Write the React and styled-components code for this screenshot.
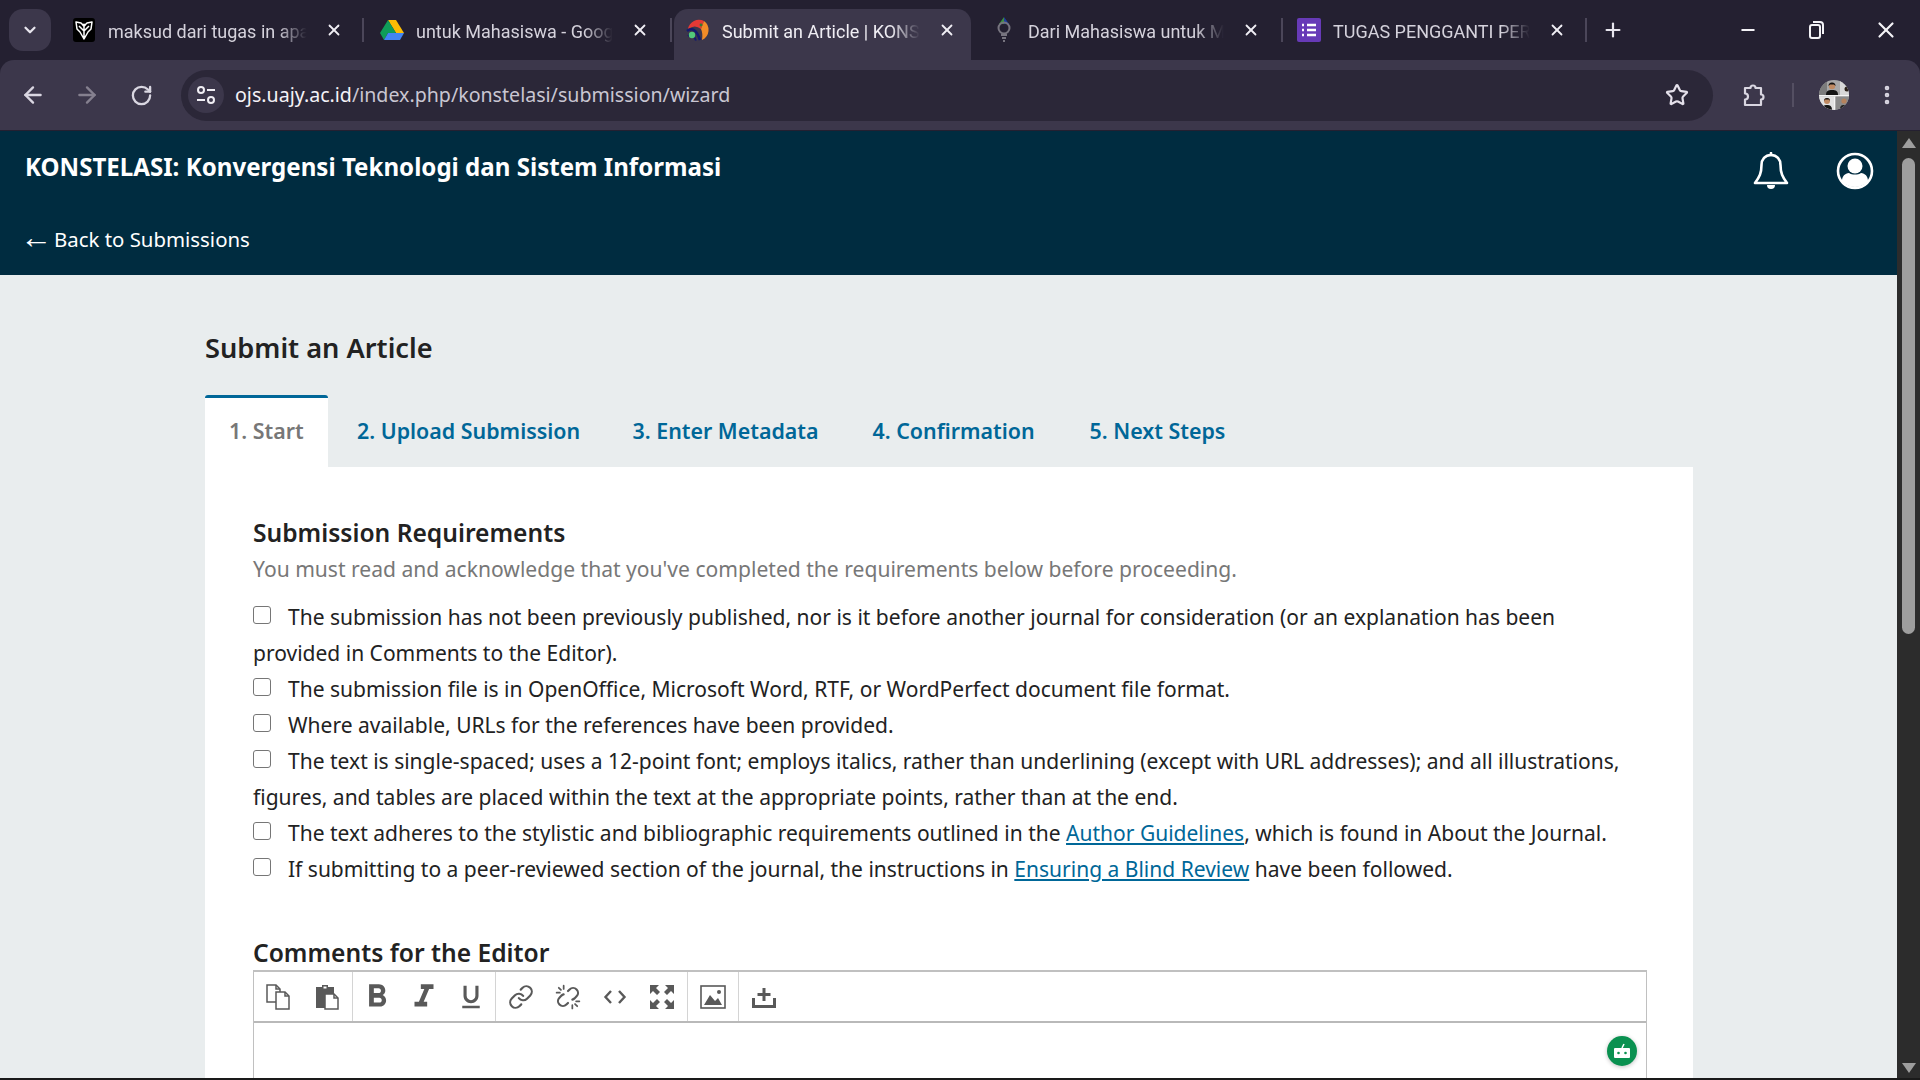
import styled, { createGlobalStyle } from "styled-components";
import {
  ArrowLeft,
  ArrowRight,
  RotateCw,
  Star,
  EllipsisVertical,
  Plus,
  X,
  Minus,
  ChevronDown,
} from "lucide-react";
import { MdFormatBold, MdFormatItalic, MdFormatUnderlined } from "react-icons/md";

const GlobalStyle = createGlobalStyle`
  html, body {
    margin: 0;
    padding: 0;
    background: #000;
    overflow: hidden;
  }
  * { box-sizing: border-box; }
`;

const Screen = styled.div`
  width: 1920px;
  height: 1080px;
  display: flex;
  flex-direction: column;
  overflow: hidden;
  font-family: "Noto Sans", sans-serif;
  border-bottom: 2px solid #1a1a1a;
`;

/* browser chrome */
const TabStrip = styled.div`
  height: 60px;
  flex-shrink: 0;
  background: #242031;
  display: flex;
  align-items: flex-start;
  padding: 9px 0 0 9px;
  font-family: "Roboto", "Noto Sans", sans-serif;
`;

const TabListButton = styled.div`
  width: 42px;
  height: 42px;
  margin-right: 9px;
  border-radius: 14px;
  background: #3c374b;
  color: #e8e6ee;
  display: flex;
  align-items: center;
  justify-content: center;
`;

const Tab = styled.div`
  position: relative;
  width: ${({ $width }) => $width}px;
  height: 51px;
  margin-left: ${({ $gap }) => $gap || 0}px;
  flex-shrink: 0;
  display: flex;
  align-items: center;
  padding: 0 ${({ $padRight }) => $padRight}px 9px ${({ $pad }) => $pad}px;
  border-radius: 14px 14px 0 0;
  background: ${({ $active }) => ($active ? "#3c374b" : "transparent")};
  color: ${({ $active }) => ($active ? "#f0eef4" : "#d5d2dc")};

  ${({ $divider }) =>
    $divider &&
    `&::after {
      content: "";
      position: absolute;
      right: 2px;
      top: 9px;
      width: 2px;
      height: 24px;
      background: #4b4659;
    }`}
`;

const Favicon = styled.span`
  width: 24px;
  height: 24px;
  flex-shrink: 0;
  display: flex;
  align-items: center;
  justify-content: center;
`;

const TabTitle = styled.span`
  flex: 1;
  margin-left: 12px;
  padding-top: 2px;
  font-size: 18px;
  white-space: nowrap;
  overflow: hidden;
  -webkit-mask-image: linear-gradient(to right, #000 82%, transparent 96%);
  mask-image: linear-gradient(to right, #000 82%, transparent 96%);
`;

const TabClose = styled(X)`
  flex-shrink: 0;
  margin-left: 10px;
  color: #f0eef4;
`;

const NewTab = styled.div`
  width: 48px;
  height: 42px;
  display: flex;
  align-items: center;
  justify-content: center;
  color: #e8e6ee;
`;

const WindowControls = styled.div`
  margin-left: auto;
  height: 42px;
  display: flex;
  align-items: center;
  color: #f4f3f7;
`;

const WindowButton = styled.div`
  width: 68px;
  height: 42px;
  display: flex;
  align-items: center;
  justify-content: center;

  &:last-child {
    margin-left: 2px;
  }
`;

const Toolbar = styled.div`
  height: 71px;
  flex-shrink: 0;
  background: #242031;
`;

const ToolbarInner = styled.div`
  height: 70px;
  background: #3c374b;
  border-radius: 14px 14px 0 0;
  display: flex;
  align-items: center;
  padding-left: 6px;
  color: #d9d6e1;
`;

const NavButton = styled.div`
  width: 54px;
  height: 54px;
  display: flex;
  align-items: center;
  justify-content: center;
  color: ${({ $dim }) => ($dim ? "#85808f" : "#d9d6e1")};
`;

const MenuButton = styled(NavButton)`
  margin-left: 11px;
`;

const AddressBar = styled.div`
  width: 1532px;
  margin-left: 13px;
  height: 51px;
  border-radius: 26px;
  background: #2b2738;
  display: flex;
  align-items: center;
  padding: 0 24px 0 7px;
`;

const SiteInfo = styled.div`
  width: 36px;
  height: 36px;
  border-radius: 50%;
  background: #3c374b;
  display: flex;
  align-items: center;
  justify-content: center;
`;

const Url = styled.div`
  margin-left: 11px;
  margin-bottom: 2px;
  flex: 1;
  font-size: 19.6px;
  color: #c9c6d2;
  white-space: nowrap;
`;

const UrlHost = styled.span`
  color: #f3f1f6;
`;

const ToolbarRight = styled.div`
  display: flex;
  align-items: center;
  margin-left: 14px;
  color: #c9c3dc;
`;

const ToolbarDivider = styled.div`
  width: 2px;
  height: 24px;
  margin: 0 25px 0 11px;
  background: #544f62;
`;

const Avatar = styled.div`
  width: 30px;
  height: 30px;
  border-radius: 50%;
  overflow: hidden;
`;

/* page */
const Viewport = styled.div`
  flex: 1;
  min-height: 0;
  display: flex;
  background: #e9edee;
`;

const Page = styled.div`
  flex: 1;
  min-width: 0;
  overflow: hidden;
`;

const Scrollbar = styled.div`
  width: 23px;
  flex-shrink: 0;
  background: #2c2c2c;
  display: flex;
  flex-direction: column;
  align-items: center;
  padding: 7px 0 5px;
`;

const ScrollArrow = styled.div`
  width: 0;
  height: 0;
  flex-shrink: 0;
  border-left: 7.5px solid transparent;
  border-right: 7.5px solid transparent;
  ${({ $down }) =>
    $down
      ? "border-top: 10px solid #9e9e9e; margin-top: auto;"
      : "border-bottom: 10px solid #9e9e9e;"}
`;

const ScrollThumb = styled.div`
  width: 13px;
  height: 476px;
  margin-top: 10px;
  border-radius: 7px;
  background: #9e9e9e;
`;

const Header = styled.header`
  height: 144px;
  background: #002c40;
  color: #fff;
  display: flex;
  justify-content: space-between;
  padding: 19px 23px 0 25px;
`;

const HeaderLeft = styled.div`
  display: flex;
  flex-direction: column;
`;

const JournalTitle = styled.div`
  font-size: 24.1px;
  font-weight: 700;
  line-height: 34px;
`;

const BackLink = styled.div`
  display: flex;
  align-items: center;
  height: 28px;
  margin-top: 41px;
  font-size: 20.4px;
  line-height: 28px;
`;

const BackArrow = styled.span`
  margin: 0 2px 5px -5px;
  font-family: "Liberation Sans", sans-serif;
  font-size: 32px;
  line-height: 28px;
`;

const HeaderIcons = styled.div`
  display: flex;
  gap: 47px;
  align-items: flex-start;
  padding-top: 2px;
`;

const Main = styled.main`
  margin: 0 204px 0 205px;
`;

const PageTitle = styled.h1`
  margin: 0;
  padding-top: 54px;
  font-size: 27.2px;
  line-height: 38px;
  font-weight: 600;
  color: #222;
`;

const Tabs = styled.div`
  display: flex;
  margin-top: 28px;
  height: 72px;
`;

const StepTab = styled.div`
  padding: ${({ $active }) => ($active ? "0 24px" : "0 0")};
  width: ${({ $width }) => $width}px;
  margin-left: ${({ $left }) => $left || 0}px;
  flex-shrink: 0;
  background: ${({ $active }) => ($active ? "#fff" : "transparent")};
  border-top: 3px solid ${({ $active }) => ($active ? "#006798" : "transparent")};
  border-radius: 3px 3px 0 0;
  font-size: 21.4px;
  font-weight: 600;
  line-height: 66px;
  color: ${({ $active }) => ($active ? "#777" : "#006798")};
  white-space: nowrap;
`;

const Card = styled.section`
  background: #fff;
  padding: 48px 46px 0 48px;
`;

const SectionTitle = styled.h2`
  margin: 0;
  font-size: 24.6px;
  font-weight: 600;
  line-height: 36px;
  color: #222;
`;

const Description = styled.p`
  margin: 0 0 12px;
  font-size: 21.08px;
  line-height: 36px;
  color: #777;
`;

const Requirements = styled.ul`
  list-style: none;
  margin: 0;
  padding: 0;
`;

const Requirement = styled.li`
  font-size: 21.03px;
  line-height: 36px;
  color: #222;
`;

const Checkbox = styled.input.attrs({ type: "checkbox" })`
  appearance: none;
  width: 18px;
  height: 18px;
  margin: 0 17px 0 0;
  border: 1.5px solid #767676;
  border-radius: 3px;
  background: #fff;
  vertical-align: 1px;
`;

const TextLink = styled.a`
  color: #006798;
  text-decoration: underline;
`;

const EditorLabel = styled(SectionTitle)`
  margin-top: 48px;
`;

const Editor = styled.div`
  position: relative;
  border: 1px solid #c0c0c0;
  border-top-width: 2px;
  margin-top: -1px;
  height: 200px;
`;

const EditorToolbar = styled.div`
  height: 51px;
  display: flex;
  border-bottom: 2px solid #b9b9b9;
  color: #595959;
`;

const ToolGroup = styled.div`
  display: flex;
  align-items: center;
  padding: 0 ${({ $pad }) => $pad}px;
  gap: ${({ $gap }) => $gap}px;
  border-right: ${({ $last }) => ($last ? "none" : "1px solid #d4d4d4")};
`;

const ToolIcon = styled.span`
  width: 30px;
  height: 30px;
  display: flex;
  align-items: center;
  justify-content: center;

  svg {
    flex-shrink: 0;
  }
`;

const BotBadge = styled.div`
  position: absolute;
  top: 64px;
  right: 9px;
  width: 30px;
  height: 30px;
  border-radius: 50%;
  background: #0a9150;
  box-shadow: 0 1px 4px rgba(0, 0, 0, 0.25);
  display: flex;
  align-items: center;
  justify-content: center;
`;

const browserTabs = [
  { title: "maksud dari tugas in apa", width: 306, pad: 12, padRight: 23, divider: true, icon: "spider" },
  { title: "untuk Mahasiswa - Google Drive", width: 308, pad: 14, padRight: 25, divider: true, icon: "drive" },
  { title: "Submit an Article | KONSTELASI", width: 297, pad: 12, padRight: 15, active: true, icon: "journal" },
  { title: "Dari Mahasiswa untuk Mahasiswa", width: 312, pad: 19, padRight: 25, gap: 2, divider: true, icon: "bulb" },
  { title: "TUGAS PENGGANTI PERTEMUAN", width: 304, pad: 12, padRight: 23, divider: true, icon: "forms" },
];

const FaviconIcon = ({ kind }) => {
  if (kind === "spider") {
    return (
      <svg width="24" height="24" viewBox="0 0 24 24">
        <rect x="1" width="22" height="24" rx="3" fill="#000" />
        <path
          d="M4 4l5 1 3 3 3-3 5-1-1 7-3 3-4 7-4-7-3-3zM12 8v13M7 8l5 5 5-5"
          stroke="#fff"
          strokeWidth="1.5"
          strokeLinejoin="round"
          fill="none"
        />
        <circle cx="12" cy="7" r="1.600" fill="#fff" />
      </svg>
    );
  }
  if (kind === "drive") {
    return (
      <svg width="24" height="22" viewBox="0 0 24 22">
        <path d="M8 1h8l8 13h-8z" fill="#fbbc04" />
        <path d="M8 1l8 13H8l-4 7-4-7z" fill="#0f9d58" />
        <path d="M4 21h16l4-7H8z" fill="#4285f4" />
      </svg>
    );
  }
  if (kind === "journal") {
    return (
      <svg width="24" height="24" viewBox="0 0 24 24">
        <path d="M2 11A11 11 0 0 1 18 3L15 11Q9 6 2 11z" fill="#e53935" />
        <path d="M18 3A11 11 0 0 1 16 22Q17 15 15 11z" fill="#f28c28" />
        <path d="M1 13Q9 7 14 22" fill="none" stroke="#141a6e" strokeWidth="2.600" />
        <path d="M2 18Q7 14 10 22.500" fill="none" stroke="#141a6e" strokeWidth="2" />
        <circle cx="6" cy="17" r="3.200" fill="#52c87a" />
        <circle cx="15" cy="7" r="1.400" fill="#2e7d32" />
      </svg>
    );
  }
  if (kind === "bulb") {
    return (
      <svg width="24" height="26" viewBox="0 0 24 26">
        <path d="M12 0l-5 7h5z" fill="#3e8e41" />
        <path d="M12 0l5 7h-5z" fill="#1f3f9e" />
        <circle cx="12" cy="11" r="5.5" fill="none" stroke="#77747f" strokeWidth="2" />
        <path d="M9 18h6M10 21h4M11 24h2" stroke="#77747f" strokeWidth="2" />
      </svg>
    );
  }
  return (
    <svg width="24" height="24" viewBox="0 0 24 24">
      <rect width="24" height="24" rx="2" fill="#673ab7" />
      <path d="M5 7h2M5 12h2M5 17h2M10 7h9M10 12h9M10 17h9" stroke="#fff" strokeWidth="2.4" />
    </svg>
  );
};

const TuneIcon = () => (
  <svg width="22" height="22" viewBox="0 0 22 22" fill="none" stroke="#f0eef4" strokeWidth="2">
    <circle cx="6" cy="6" r="3" />
    <path d="M12 6h8M2 16h8" />
    <circle cx="16" cy="16" r="3" />
  </svg>
);

const RestoreIcon = () => (
  <svg width="18" height="20" viewBox="0 0 18 20" fill="none" stroke="currentColor" strokeWidth="2">
    <rect x="3" y="5" width="10" height="13" rx="2" />
    <path d="M6 2h7a3 3 0 0 1 3 3v9" />
  </svg>
);

const PuzzleIcon = () => (
  <svg width="25" height="26" viewBox="0 0 25 26" fill="none" stroke="currentColor" strokeWidth="2.2" strokeLinejoin="round">
    <path d="M3 6h5.500a2.500 2.500 0 0 1 5 0H19v6.500a2.500 2.500 0 0 1 0 5V23H3v-5.500a3 3 0 0 0 0-6z" />
  </svg>
);

const AvatarImage = () => (
  <svg width="30" height="30" viewBox="0 0 30 30">
    <rect width="30" height="30" fill="#a8a8a8" />
    <rect x="21" y="0" width="9" height="15" fill="#d8d8d8" />
    <rect y="0" width="8" height="15" fill="#7c7c7c" />
    <path d="M7 15c0-4 2-5 6-5s6 1 6 5z" fill="#141414" />
    <circle cx="13" cy="6" r="3.200" fill="#c08a62" />
    <path d="M9.500 6a3.500 3.500 0 0 1 7 0l-1.500-1.500h-4z" fill="#111" />
    <circle cx="28" cy="9" r="2.500" fill="#2a2018" />
    <rect y="15" width="30" height="1.500" fill="#f4f4f4" />
    <rect y="16.500" width="15" height="13.500" fill="#e2e2e2" />
    <rect x="15" y="16.500" width="1.500" height="13.500" fill="#f4f4f4" />
    <rect x="16.500" y="16.500" width="13.500" height="13.500" fill="#8a8a8a" />
    <path d="M3 30c0-4 2-5 5-5s5 1 5 5z" fill="#161616" />
    <circle cx="8" cy="21" r="3" fill="#c08a62" />
    <path d="M5 21a3 3 0 0 1 6 0l-1-1.500H6z" fill="#111" />
    <path d="M21 30c0-4 1-5 4-5s4 1 4 5z" fill="#222" />
    <circle cx="25" cy="21" r="2.600" fill="#b5825c" />
  </svg>
);

const BellIcon = () => (
  <svg width="36" height="38" viewBox="0 0 36 38" fill="none" stroke="#fff" strokeWidth="2.6" strokeLinejoin="round">
    <path d="M18 3c-6 0-9.500 4.500-9.500 10 0 8-2 12-6.500 18h32c-4.500-6-6.500-10-6.500-18 0-5.500-3.500-10-9.500-10z" />
    <path d="M18 1v2" strokeLinecap="round" />
    <path d="M14 33a4 4 0 0 0 8 0z" fill="#fff" stroke="none" />
  </svg>
);

const UserIcon = () => (
  <svg width="38" height="38" viewBox="0 0 38 38">
    <circle cx="19" cy="19" r="17" fill="none" stroke="#fff" strokeWidth="2.6" />
    <circle cx="19" cy="14" r="7.500" fill="#fff" />
    <path d="M6 29c0-5 3-7.500 7-8 3 2 9 2 12 0 4 .5 7 3 7 8-3.500 4-8 6-13 6s-9.500-2-13-6z" fill="#fff" />
  </svg>
);

const CopyIcon = () => (
  <svg width="28" height="28" viewBox="0 0 28 28" fill="none" stroke="currentColor" strokeWidth="1.5">
    <path d="M2 2h9l4 4v13H2z" fill="#fff" />
    <path d="M11 2v4h4" />
    <path d="M11 9h9l4 4v13H11z" fill="#fff" />
    <path d="M20 9v4h4" />
  </svg>
);

const PasteIcon = () => (
  <svg width="28" height="28" viewBox="0 0 28 28">
    <path d="M3 4h6V2h6v2h6v7H12v14H3z" fill="currentColor" />
    <path d="M10.500 3.500h3v2h-3z" fill="#fff" />
    <path d="M12 11h9l4 4v11H12z" fill="#fff" stroke="currentColor" strokeWidth="1.5" />
    <path d="M21 11v4h4" fill="none" stroke="currentColor" strokeWidth="1.5" />
  </svg>
);

const ChainIcon = () => (
  <svg width="26" height="26" viewBox="0 0 24 24" fill="none" stroke="currentColor" strokeWidth="2" strokeLinecap="round">
    <path d="M10 13a5 5 0 0 0 7.540.540l3-3a5 5 0 0 0-7.070-7.070l-1.720 1.710" />
    <path d="M14 11a5 5 0 0 0-7.540-.540l-3 3a5 5 0 0 0 7.070 7.070l1.710-1.710" />
  </svg>
);

const BrokenChainIcon = () => (
  <svg width="26" height="26" viewBox="0 0 24 24" fill="none" stroke="currentColor" strokeWidth="2" strokeLinecap="round">
    <path d="M12 6.500l1.500-1.500a4.500 4.500 0 0 1 6.400 6.400l-1.900 1.900a4.500 4.500 0 0 1-2 1.100" />
    <path d="M12 17.500l-1.500 1.500a4.500 4.500 0 0 1-6.400-6.400l1.900-1.900a4.500 4.500 0 0 1 2-1.100" />
    <path d="M8 1.500v3M1.500 8h3M3.500 3.500l2 2M16 19.500v3M19.500 16h3M20.500 20.500l-2-2" strokeWidth="1.600" />
  </svg>
);

const CodeIcon = () => (
  <svg width="24" height="18" viewBox="0 0 24 18" fill="none" stroke="currentColor" strokeWidth="2.4">
    <path d="M8 3L2.500 9 8 15M16 3l5.500 6-5.500 6" />
  </svg>
);

const ExpandIcon = () => (
  <svg width="26" height="26" viewBox="0 0 26 26" fill="currentColor">
    <path d="M1 1h9l-3 3 4 4-3 3-4-4-3 3zM25 1v9l-3-3-4 4-3-3 4-4-3-3zM1 25v-9l3 3 4-4 3 3-4 4 3 3zM25 25h-9l3-3-4-4 3-3 4 4 3-3z" />
  </svg>
);

const PictureIcon = () => (
  <svg width="26" height="24" viewBox="0 0 26 24">
    <rect x="1" y="1" width="24" height="22" fill="none" stroke="currentColor" strokeWidth="1.6" />
    <path d="M4 20l6-10 5 6 3-3 4 7z" fill="currentColor" />
    <circle cx="19" cy="7" r="2" fill="currentColor" />
  </svg>
);

const UploadIcon = () => (
  <svg width="26" height="24" viewBox="0 0 26 24" fill="currentColor">
    <path d="M11.500 3h3v5h5v3h-5v5h-3v-5h-5V8h5z" />
    <path d="M1 13h3v7h18v-7h3v10H1z" />
  </svg>
);

const BotIcon = () => (
  <svg width="20" height="20" viewBox="0 0 20 20">
    <path d="M10 7l2-4" stroke="#fff" strokeWidth="1.500" />
    <rect x="2" y="7" width="16" height="10" rx="1" fill="#fff" />
    <circle cx="6.500" cy="12" r="1.300" fill="#0a9150" />
    <circle cx="13.500" cy="12" r="1.300" fill="#0a9150" />
  </svg>
);

function App() {
  return (
    <>
      <GlobalStyle />
      <Screen>
        <TabStrip>
          <TabListButton>
            <ChevronDown size={18} strokeWidth={3} />
          </TabListButton>
          {browserTabs.map((tab) => (
            <Tab
              key={tab.title}
              $width={tab.width}
              $pad={tab.pad}
              $padRight={tab.padRight}
              $gap={tab.gap}
              $active={tab.active}
              $divider={tab.divider}
            >
              <Favicon>
                <FaviconIcon kind={tab.icon} />
              </Favicon>
              <TabTitle>{tab.title}</TabTitle>
              <TabClose size={18} strokeWidth={2.4} />
            </Tab>
          ))}
          <NewTab>
            <Plus size={22} strokeWidth={2.4} />
          </NewTab>
          <WindowControls>
            <WindowButton>
              <Minus size={20} strokeWidth={2.2} />
            </WindowButton>
            <WindowButton>
              <RestoreIcon />
            </WindowButton>
            <WindowButton>
              <X size={26} strokeWidth={2} />
            </WindowButton>
          </WindowControls>
        </TabStrip>
        <Toolbar>
          <ToolbarInner>
            <NavButton>
              <ArrowLeft size={26} strokeWidth={2.2} />
            </NavButton>
            <NavButton $dim>
              <ArrowRight size={26} strokeWidth={2.2} />
            </NavButton>
            <NavButton>
              <RotateCw size={23} strokeWidth={2.4} />
            </NavButton>
            <AddressBar>
              <SiteInfo>
                <TuneIcon />
              </SiteInfo>
              <Url>
                <UrlHost>ojs.uajy.ac.id</UrlHost>/index.php/konstelasi/submission/wizard
              </Url>
              <Star size={24} strokeWidth={2.2} color="#e4e0ea" />
            </AddressBar>
            <ToolbarRight>
              <NavButton>
                <PuzzleIcon />
              </NavButton>
              <ToolbarDivider />
              <Avatar>
                <AvatarImage />
              </Avatar>
              <MenuButton>
                <EllipsisVertical size={24} strokeWidth={2.6} />
              </MenuButton>
            </ToolbarRight>
          </ToolbarInner>
        </Toolbar>
        <Viewport>
          <Page>
            <Header>
              <HeaderLeft>
                <JournalTitle>KONSTELASI: Konvergensi Teknologi dan Sistem Informasi</JournalTitle>
                <BackLink>
                  <BackArrow>←</BackArrow>
                  Back to Submissions
                </BackLink>
              </HeaderLeft>
              <HeaderIcons>
                <BellIcon />
                <UserIcon />
              </HeaderIcons>
            </Header>
            <Main>
              <PageTitle>Submit an Article</PageTitle>
              <Tabs>
                <StepTab $active $width={123}>1. Start</StepTab>
                <StepTab $left={29} $width={275.5}>2. Upload Submission</StepTab>
                <StepTab $width={240}>3. Enter Metadata</StepTab>
                <StepTab $width={217}>4. Confirmation</StepTab>
                <StepTab>5. Next Steps</StepTab>
              </Tabs>
              <Card>
                <SectionTitle>Submission Requirements</SectionTitle>
                <Description>
                  You must read and acknowledge that you've completed the requirements below before proceeding.
                </Description>
                <Requirements>
                  <Requirement>
                    <Checkbox />
                    The submission has not been previously published, nor is it before another journal for
                    consideration (or an explanation has been provided in Comments to the Editor).
                  </Requirement>
                  <Requirement>
                    <Checkbox />
                    The submission file is in OpenOffice, Microsoft Word, RTF, or WordPerfect document file format.
                  </Requirement>
                  <Requirement>
                    <Checkbox />
                    Where available, URLs for the references have been provided.
                  </Requirement>
                  <Requirement>
                    <Checkbox />
                    The text is single-spaced; uses a 12-point font; employs italics, rather than underlining
                    (except with URL addresses); and all illustrations, figures, and tables are placed within the
                    text at the appropriate points, rather than at the end.
                  </Requirement>
                  <Requirement>
                    <Checkbox />
                    The text adheres to the stylistic and bibliographic requirements outlined in the{" "}
                    <TextLink>Author Guidelines</TextLink>, which is found in About the Journal.
                  </Requirement>
                  <Requirement>
                    <Checkbox />
                    If submitting to a peer-reviewed section of the journal, the instructions in{" "}
                    <TextLink>Ensuring a Blind Review</TextLink> have been followed.
                  </Requirement>
                </Requirements>
                <EditorLabel>Comments for the Editor</EditorLabel>
                <Editor>
                  <EditorToolbar>
                    <ToolGroup $pad={10} $gap={18}>
                      <ToolIcon>
                        <CopyIcon />
                      </ToolIcon>
                      <ToolIcon>
                        <PasteIcon />
                      </ToolIcon>
                    </ToolGroup>
                    <ToolGroup $pad={9} $gap={17}>
                      <ToolIcon>
                        <MdFormatBold size={38} />
                      </ToolIcon>
                      <ToolIcon>
                        <MdFormatItalic size={38} />
                      </ToolIcon>
                      <ToolIcon>
                        <MdFormatUnderlined size={30} />
                      </ToolIcon>
                    </ToolGroup>
                    <ToolGroup $pad={10} $gap={17}>
                      <ToolIcon>
                        <ChainIcon />
                      </ToolIcon>
                      <ToolIcon>
                        <BrokenChainIcon />
                      </ToolIcon>
                      <ToolIcon>
                        <CodeIcon />
                      </ToolIcon>
                      <ToolIcon>
                        <ExpandIcon />
                      </ToolIcon>
                    </ToolGroup>
                    <ToolGroup $pad={10} $gap={0}>
                      <ToolIcon>
                        <PictureIcon />
                      </ToolIcon>
                    </ToolGroup>
                    <ToolGroup $pad={10} $gap={0} $last>
                      <ToolIcon>
                        <UploadIcon />
                      </ToolIcon>
                    </ToolGroup>
                  </EditorToolbar>
                  <BotBadge>
                    <BotIcon />
                  </BotBadge>
                </Editor>
              </Card>
            </Main>
          </Page>
          <Scrollbar>
            <ScrollArrow />
            <ScrollThumb />
            <ScrollArrow $down />
          </Scrollbar>
        </Viewport>
      </Screen>
    </>
  );
}

export default App;
